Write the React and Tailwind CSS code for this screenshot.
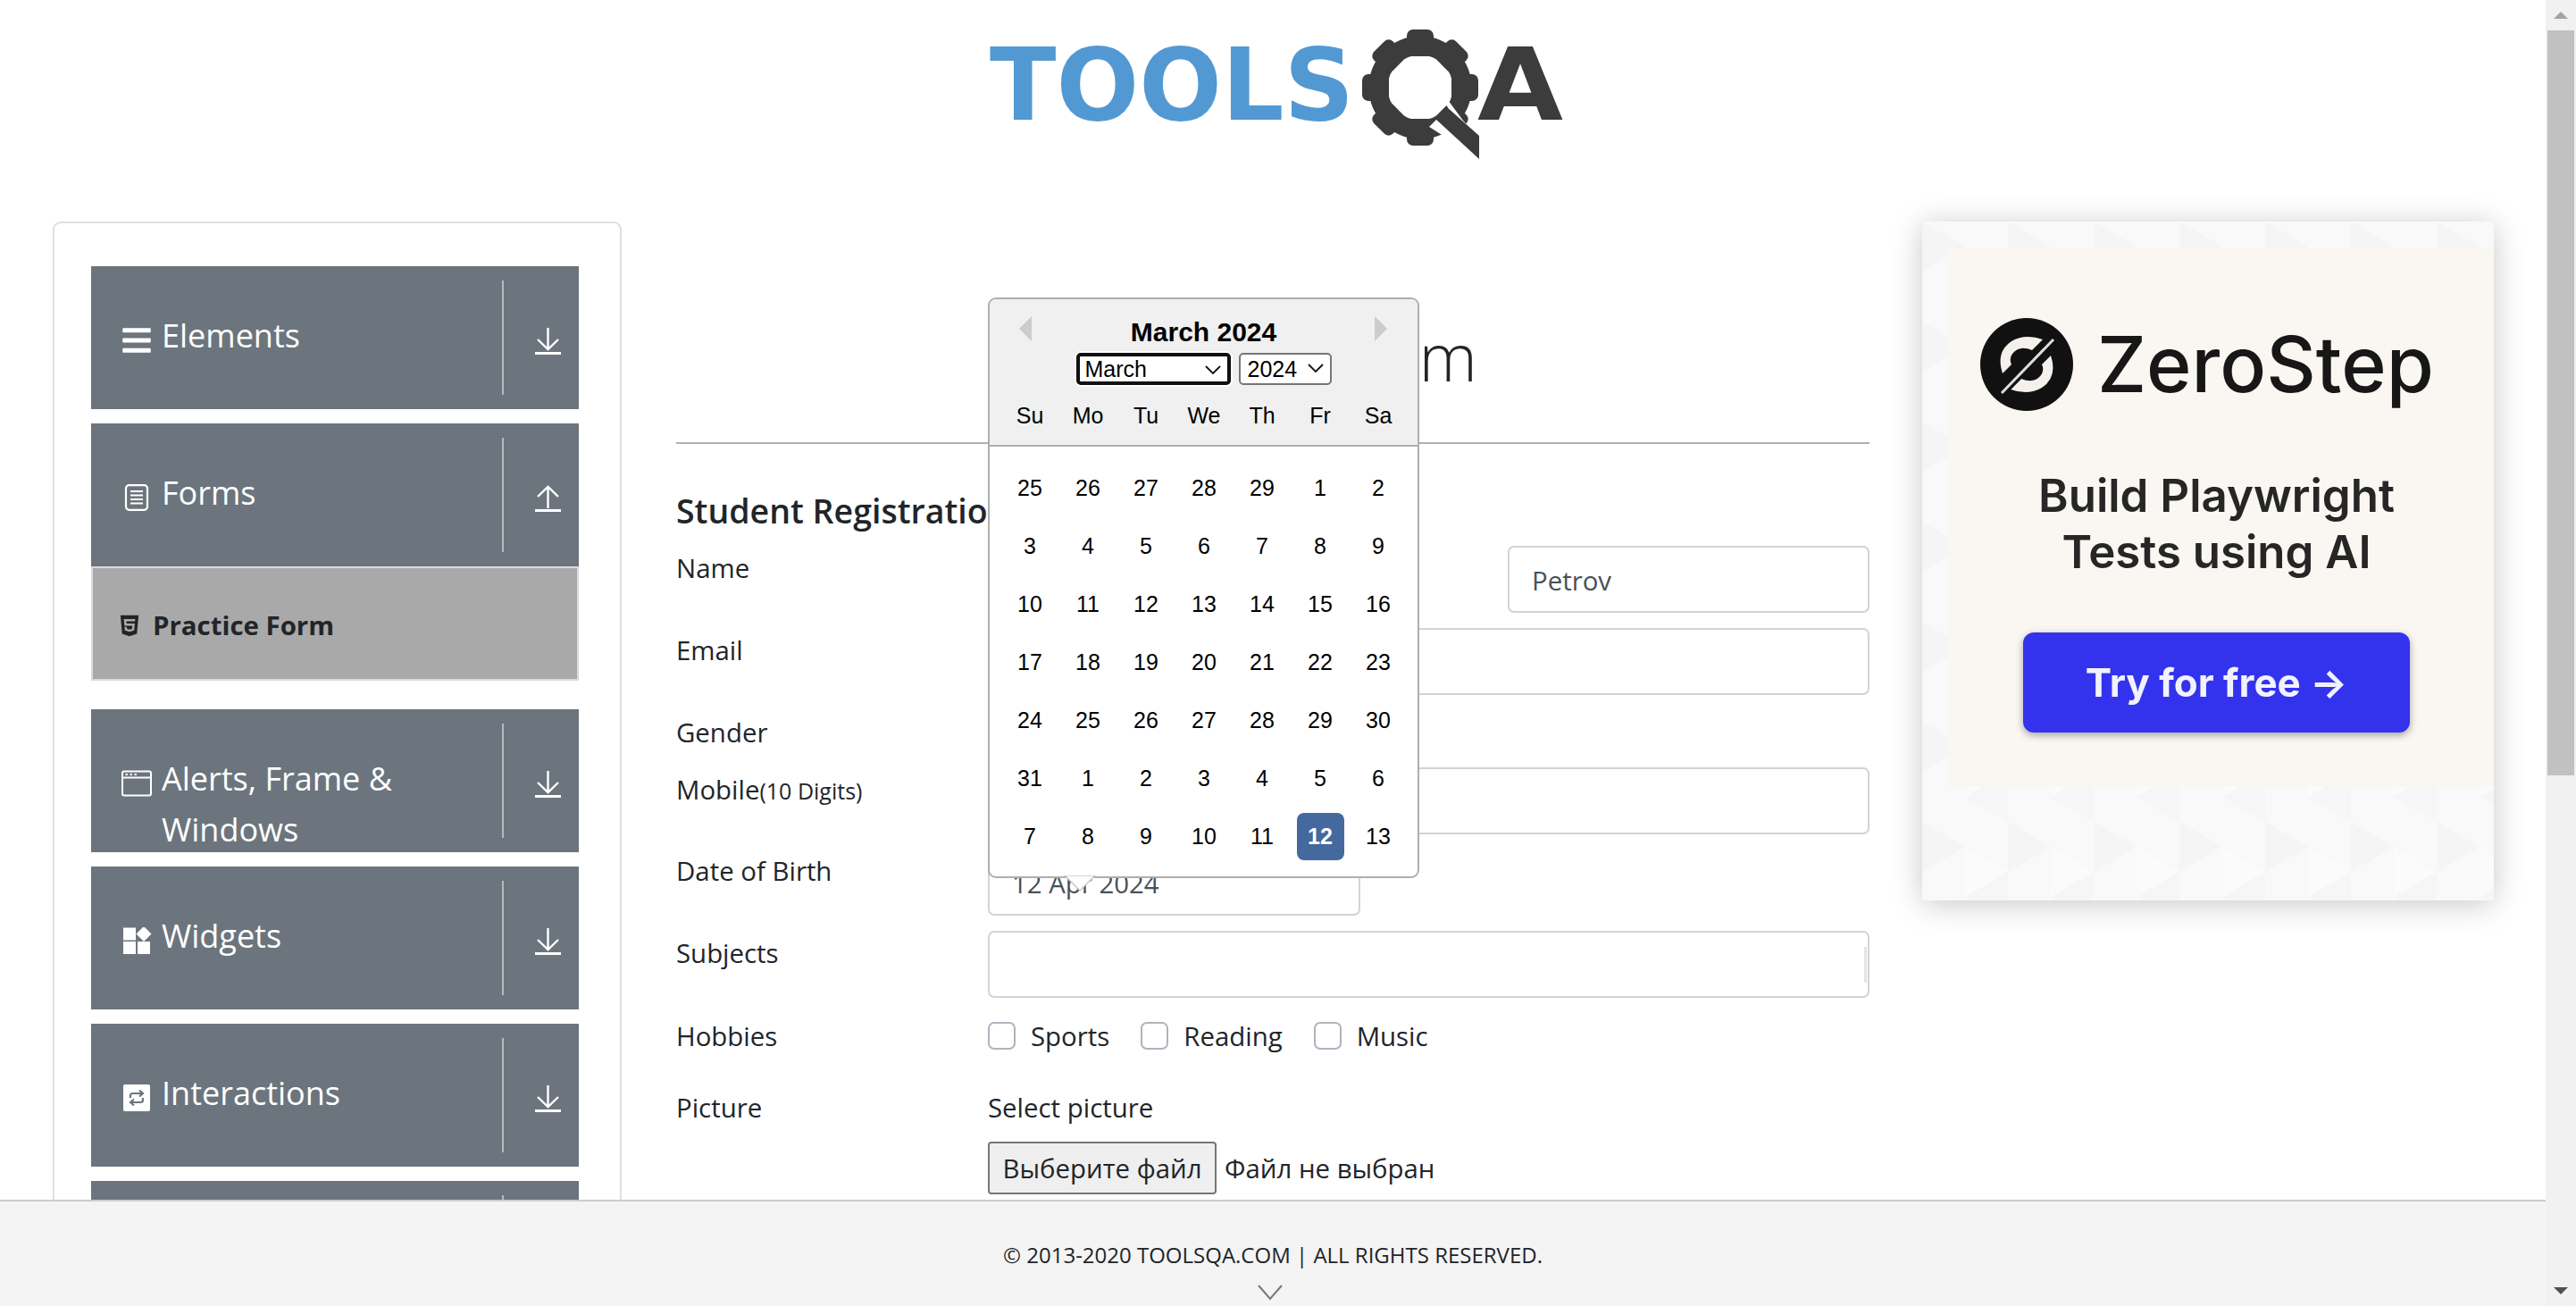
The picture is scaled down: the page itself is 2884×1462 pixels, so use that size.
import React from "react";
import { FaBars, FaHtml5 } from "react-icons/fa";

const bodyFont = "font-['Open_Sans','Noto_Sans',sans-serif]";
const arialFont = "font-['Liberation_Sans',Arial,sans-serif]";

const Arrow = ({ up = false }) => (
  <svg width="29" height="30" viewBox="0 0 29 30" fill="none" stroke="white">
    <g strokeWidth="2.4" transform={up ? "matrix(1 0 0 -1 0 26)" : undefined}>
      <path d="M14.5 0V24M3 13L14.5 24L26 13" />
    </g>
    <rect x="0" y="27" width="29" height="3" fill="white" stroke="none" />
  </svg>
);

const FormsIcon = () => (
  <svg width="34" height="30" viewBox="0 0 34 30" fill="none" stroke="white">
    <rect x="5" y="1.2" width="24" height="27.6" rx="3.5" strokeWidth="2.2" />
    <path d="M10 8H24M10 12.5H24M10 17H24M10 21.5H24" strokeWidth="1.8" />
  </svg>
);

const WindowIcon = () => (
  <svg width="34" height="30" viewBox="0 0 34 30" fill="none" stroke="white">
    <rect x="1" y="1.5" width="32" height="27" rx="2" strokeWidth="2" />
    <path d="M1 8.5H33" strokeWidth="2" />
    <path d="M4.5 5H7M9.5 5H12M14.5 5H17" strokeWidth="2" />
  </svg>
);

const WidgetsIcon = () => (
  <svg width="34" height="30" viewBox="0 0 34 30" fill="white">
    <rect x="2" y="0.5" width="14" height="14" />
    <rect x="2" y="16" width="14" height="14" />
    <rect x="18" y="16" width="14" height="14" />
    <rect x="19" y="1.5" width="12" height="12" transform="rotate(45 25 7.5)" />
  </svg>
);

const InteractionsIcon = () => (
  <svg width="34" height="30" viewBox="0 0 34 30" fill="none">
    <rect x="2" y="0" width="30" height="30" rx="2" fill="white" />
    <path d="M10 15V12.5Q10 10 12.5 10H23M20 6.5L24 10L20 13.5" stroke="#6c757d" strokeWidth="2.2" />
    <path d="M24 15V17.5Q24 20 21.5 20H11M14 16.5L10 20L14 23.5" stroke="#6c757d" strokeWidth="2.2" />
  </svg>
);

const NavButton = ({ icon, label, up = false }) => (
  <div className="mt-4 flex h-[160px] w-[546px] overflow-hidden bg-[#6c757d] text-white">
    <div className="flex min-w-0 flex-1 pl-[34px] pt-[49px]">
      <span className="mr-[11px] mt-[19px] block h-[30px] w-[34px] shrink-0">{icon}</span>
      <span className="text-[36px] leading-[57px]">{label}</span>
    </div>
    <div className="my-4 flex w-[86px] items-center justify-center border-l-2 border-[#b5babe] pl-[14px] pt-2">
      <Arrow up={up} />
    </div>
  </div>
);

const Logo = () => {
  const teeth = [0, 45, 90, 135, 180, 225, 270, 315];
  return (
    <svg width="650" height="150" viewBox="1100 30 650 150" className="mx-auto block">
      <text
        x="1108"
        y="134"
        fontFamily="DejaVu Sans"
        fontWeight="700"
        fontSize="113"
        fill="#5299d3"
        textLength="408"
        lengthAdjust="spacingAndGlyphs"
      >
        TOOLS
      </text>
      <g fill="#3c3c3c">
        {teeth.map((a) => (
          <rect key={a} x="1575" y="33" width="30" height="30" rx="7" transform={`rotate(${a} 1590 98)`} />
        ))}
      </g>
      <circle cx="1590" cy="98" r="47" fill="none" stroke="#3c3c3c" strokeWidth="21" />
      <path d="M1600 142L1622 120L1660 156V180Z" fill="white" />
      <path d="M1618 112L1640 142" stroke="white" strokeWidth="5" />
      <path d="M1607 133L1620 120L1656 152V178Z" fill="#3c3c3c" />
      <text
        x="1654"
        y="134"
        fontFamily="DejaVu Sans"
        fontWeight="700"
        fontSize="113"
        fill="#3c3c3c"
        textLength="96"
        lengthAdjust="spacingAndGlyphs"
      >
        A
      </text>
    </svg>
  );
};

const Sidebar = () => (
  <div className="h-[1200px] w-[637px] shrink-0 rounded-[9px] border-2 border-[#dfdfdf] px-[41px] pt-[32px]">
    <NavButton icon={<FaBars className="h-[36px] w-[34px] -translate-y-[3px]" />} label="Elements" />
    <NavButton icon={<FormsIcon />} label="Forms" up />
    <div className="mb-8 flex h-[128px] w-[546px] items-center border-2 border-[#d8dade] bg-[#a9a9a9] pl-[28px] pt-1 text-[#212529]">
      <FaHtml5 className="mr-[13px] h-[27px] w-[26px]" />
      <span className="text-[29.4px] font-bold">Practice Form</span>
    </div>
    <NavButton icon={<WindowIcon />} label="Alerts, Frame & Windows" />
    <NavButton icon={<WidgetsIcon />} label="Widgets" />
    <NavButton icon={<InteractionsIcon />} label="Interactions" />
    <NavButton icon={<FaBars />} label="Book Store Application" />
  </div>
);

const inputClass =
  "block h-[75px] rounded-[7px] border-2 border-[#ced4da] bg-white px-[25px] pt-[2px] text-[29.4px] text-[#495057] outline-none";

const Row = ({ label, className = "", children }) => (
  <div className={`flex ${className}`}>
    <div className="w-[349px] shrink-0 pt-[3px] text-[29.4px] leading-[44px]">{label}</div>
    <div className="min-w-0 flex-1">{children}</div>
  </div>
);

const Check = ({ label, className = "" }) => (
  <label className={`flex items-center ${className}`}>
    <span className="mr-[17px] block h-[31px] w-[31px] rounded-[7px] border-2 border-[#adb5bd] bg-white" />
    <span>{label}</span>
  </label>
);

const days = [
  25, 26, 27, 28, 29, 1, 2, 3, 4, 5, 6, 7, 8, 9, 10, 11, 12, 13, 14, 15, 16, 17, 18, 19, 20, 21, 22, 23, 24, 25, 26,
  27, 28, 29, 30, 31, 1, 2, 3, 4, 5, 6, 7, 8, 9, 10, 11, 12, 13,
];
const dayNames = ["Su", "Mo", "Tu", "We", "Th", "Fr", "Sa"];

const Chevron = () => (
  <svg
    width="18"
    height="10"
    viewBox="0 0 18 10"
    fill="none"
    stroke="#111"
    strokeWidth="1.8"
    className="pointer-events-none absolute right-[7px] top-[10px]"
  >
    <path d="M1 1L9 9L17 1" />
  </svg>
);

const Calendar = () => (
  <div className={`absolute left-[349px] top-[85px] z-10 w-[483px] rounded-[9px] border-2 border-[#aeaeae] bg-white text-black ${arialFont}`}>
    <div className="relative h-[165px] rounded-t-[7px] border-b-2 border-[#aeaeae] bg-[#f0f0f0]">
      <span className="absolute left-[33px] top-[19px] h-0 w-0 border-y-[14px] border-r-[14px] border-y-transparent border-r-[#ccc]" />
      <span className="absolute right-[34px] top-[19px] h-0 w-0 border-y-[14px] border-l-[14px] border-y-transparent border-l-[#ccc]" />
      <div className="pt-[19px] text-center text-[30px] font-bold leading-[36px]">March 2024</div>
      <div className="mt-[5px] flex justify-center gap-[9px] text-[25px] leading-[30px]">
        <div className="relative h-[36px] w-[173px] rounded-[5px] border-[4px] border-[#101010] bg-white pl-[6px] leading-[28px] shadow-[0_0_0_2px_white]">
          March
          <Chevron />
        </div>
        <div className="relative h-[36px] w-[104px] rounded-[5px] border-2 border-[#767676] bg-white pl-[8px] leading-[32px]">
          2024
          <Chevron />
        </div>
      </div>
      <div className="grid grid-cols-[repeat(7,53px)] gap-x-3 px-[18.5px] pt-[19px] text-center text-[25px] leading-[30px]">
        {dayNames.map((d) => (
          <div key={d}>{d}</div>
        ))}
      </div>
    </div>
    <div className="grid grid-cols-[repeat(7,53px)] gap-3 px-[18.5px] pb-[18px] pt-[20px] text-center text-[25px] leading-[53px]">
      {days.map((d, i) =>
        i === 47 ? (
          <div key={i} className="rounded-[8px] bg-[#44699f] font-bold text-white">
            {d}
          </div>
        ) : (
          <div key={i}>{d}</div>
        )
      )}
    </div>
    <svg width="36" height="18" viewBox="0 0 36 18" className="absolute left-[83px] top-full -mt-[1px]">
      <path d="M1 0L18 17L35 0Z" fill="white" stroke="#c8c8c8" strokeWidth="1.5" />
    </svg>
  </div>
);

const PracticeForm = () => (
  <div className="relative ml-[61px] w-[1336px] shrink-0 text-[#212529]">
    <h1 className="mt-[106px] text-center text-[74px] font-light leading-[89px]">Practice Form</h1>
    <hr className="mt-[52px] border-t-2 border-[#b0b0b0]" />
    <h5 className="mt-[53px] text-[37.5px] font-semibold leading-[44px]">Student Registration Form</h5>
    <form>
      <Row label="Name" className="mt-[17px]">
        <div className="flex justify-between">
          <input className={`${inputClass} w-[405px]`} placeholder="First Name" />
          <input className={`${inputClass} w-[405px]`} defaultValue="Petrov" />
        </div>
      </Row>
      <Row label="Email" className="mt-[17px]">
        <input className={`${inputClass} w-full`} />
      </Row>
      <Row label="Gender" className="mt-[17px] h-[47px]">
        <div className="flex gap-8 pt-[3px] text-[29.4px]">
          <span>Male</span>
          <span>Female</span>
          <span>Other</span>
        </div>
      </Row>
      <Row
        label={
          <>
            Mobile<span className="text-[25px]">(10 Digits)</span>
          </>
        }
        className="mt-[17px]"
      >
        <input className={`${inputClass} w-full`} />
      </Row>
      <Row label="Date of Birth" className="mt-4">
        <input className={`${inputClass} w-[417px]`} defaultValue="12 Apr 2024" />
      </Row>
      <Row label="Subjects" className="mt-[17px]">
        <div className="flex h-[75px] items-center justify-end rounded-[7px] border-2 border-[#ced4da] bg-white pr-[1px]">
          <span className="block h-[40px] w-[3px] bg-[#e4e4e4]" />
        </div>
      </Row>
      <Row label="Hobbies" className="mt-[18px] h-[47px]">
        <div className="flex h-[50px] items-center text-[29.4px]">
          <Check label="Sports" className="mr-[35px]" />
          <Check label="Reading" className="mr-[35px]" />
          <Check label="Music" />
        </div>
      </Row>
      <Row label="Picture" className="mt-[33px]">
        <div className="pt-[3px] text-[29.4px] leading-[44px]">Select picture</div>
        <div className="mt-[16px] flex items-center text-[29.4px]">
          <button type="button" className="h-[59px] w-[256px] rounded-[4px] border-2 border-[#767676] bg-[#efefef] pt-[2px]">
            Выберите файл
          </button>
          <span className="ml-[9px] pt-[2px]">Файл не выбран</span>
        </div>
      </Row>
    </form>
    <Calendar />
  </div>
);

const AdPattern = () => (
  <svg className="absolute inset-0 h-full w-full" aria-hidden="true">
    <defs>
      <pattern id="tri" width="96" height="112" patternUnits="userSpaceOnUse">
        <rect width="96" height="112" fill="#f9f9f9" />
        <path d="M0 0L48 28L0 56Z" fill="#f5f5f5" />
        <path d="M96 56L48 84L96 112Z" fill="#f6f6f6" />
        <path d="M48 28L96 56L48 84Z" fill="#fbfbfb" />
      </pattern>
    </defs>
    <rect width="100%" height="100%" fill="url(#tri)" />
  </svg>
);

const ZeroStepMark = () => (
  <svg width="104" height="104" viewBox="0 0 104 104" className="shrink-0">
    <circle cx="52" cy="52" r="52" fill="#111" />
    <path d="M25 62Q17 38 35 26Q50 17 70 24L58 36Q44 30 36 40Q32 46 35 52Z" fill="#f4f1ec" />
    <path d="M79 42Q87 66 69 78Q54 87 34 80L46 68Q60 74 68 64Q72 58 69 52Z" fill="#f4f1ec" />
    <path d="M24 84L82 24" stroke="#111" strokeWidth="9" />
    <path d="M24 84L82 24" stroke="#ddd" strokeWidth="3" />
  </svg>
);

const Ad = () => (
  <div className="relative ml-[59px] h-[760px] w-[640px] shrink-0 shadow-[0_4px_32px_rgba(0,0,0,0.22)]">
    <AdPattern />
    <div className="relative ml-[29px] mt-[30px] h-[603px] bg-[#faf7f2] font-[Inter,sans-serif] blur-[0.7px]">
      <div className="flex items-center pl-[36px] pt-[78px]">
        <ZeroStepMark />
        <span className="ml-[27px] text-[86px] font-medium leading-[104px] text-[#171717]">ZeroStep</span>
      </div>
      <div className="mt-[63px] pr-[10px] text-center text-[51px] font-semibold leading-[63px] text-[#262626]">
        Build Playwright
        <br />
        Tests using AI
      </div>
      <div className="ml-[84px] mt-[59px] flex h-[112px] w-[433px] items-center justify-center rounded-[12px] bg-[#3333ee] text-[44px] font-bold text-[#f2f2ff] shadow-[0_3px_8px_rgba(0,0,0,0.35)]">
        Try for free →
      </div>
    </div>
  </div>
);

const Scrollbar = () => (
  <div className="flex h-full w-[34px] shrink-0 flex-col items-center bg-[#f1f1f1]">
    <div className="flex h-[34px] w-full items-center justify-center">
      <span className="h-0 w-0 border-x-[8px] border-b-[8px] border-x-transparent border-b-[#a3a3a3]" />
    </div>
    <div className="h-[834px] w-[30px] bg-[#c1c1c1]" />
    <div className="flex-1" />
    <div className="flex h-[34px] w-full items-center justify-center">
      <span className="h-0 w-0 border-x-[8px] border-t-[8px] border-x-transparent border-t-[#505050]" />
    </div>
  </div>
);

export default function App() {
  return (
    <div className={`flex h-screen overflow-hidden bg-white ${bodyFont}`}>
      <div className="flex min-w-0 flex-1 flex-col">
        <main className="min-h-0 flex-1 overflow-hidden">
          <header className="h-[248px] pt-[30px]">
            <Logo />
          </header>
          <div className="flex pl-[59px]">
            <Sidebar />
            <PracticeForm />
            <Ad />
          </div>
        </main>
        <footer className="flex h-[119px] shrink-0 flex-col items-center border-t-2 border-[#cccccc] bg-[#f4f4f4] pt-[40px] text-[24px] leading-[40px] text-[#212529]">
          <span>© 2013-2020 TOOLSQA.COM | ALL RIGHTS RESERVED.</span>
          <svg width="28" height="18" viewBox="0 0 28 18" fill="none" stroke="#777" strokeWidth="2" className="-ml-[6px] mt-[13px]">
            <path d="M1 1L14 16L27 1" />
          </svg>
        </footer>
      </div>
      <Scrollbar />
    </div>
  );
}
